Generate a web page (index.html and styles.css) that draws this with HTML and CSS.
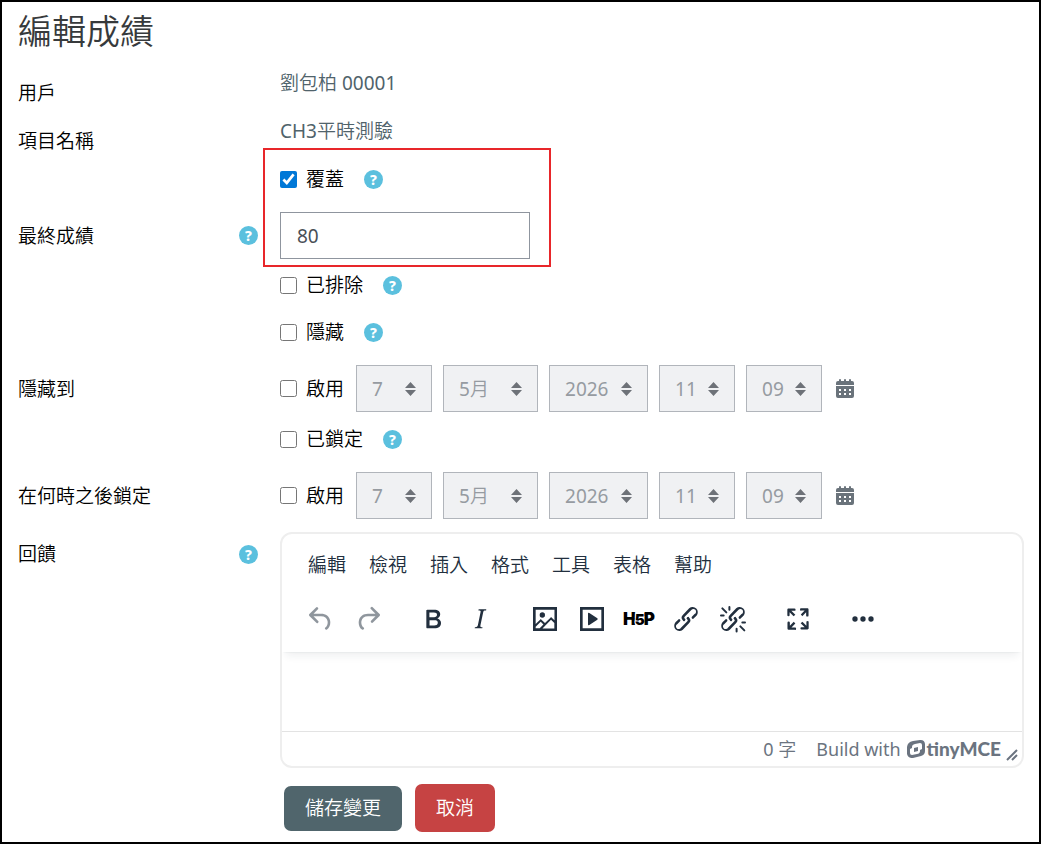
FILE: index.html
```html
<!DOCTYPE html>
<html lang="zh-Hant">
<head>
    <meta charset="UTF-8">
    <meta name="viewport" content="width=device-width, initial-scale=1">
    <title>編輯成績</title>
    <link rel="stylesheet" href="styles.css">
</head>
<body>
    <form class="page">
        <h1>編輯成績</h1>

        <div class="row row-static">
            <div class="label">用戶</div>
            <div class="field">劉包柏 00001</div>
        </div>
        <div class="row row-static">
            <div class="label">項目名稱</div>
            <div class="field">CH3平時測驗</div>
        </div>

        <div class="marked">
            <div class="row">
                <div class="field check">
                    <input type="checkbox" id="overridden" checked>
                    <label for="overridden">覆蓋</label>
                    <button type="button" class="help" aria-label="覆蓋說明">?</button>
                </div>
            </div>
            <div class="row row-control">
                <div class="label">
                    <label for="finalgrade">最終成績</label>
                    <button type="button" class="help" aria-label="最終成績說明">?</button>
                </div>
                <div class="field">
                    <input type="text" class="grade" id="finalgrade" value="80">
                </div>
            </div>
        </div>

        <div class="row">
            <div class="field check">
                <input type="checkbox" id="excluded">
                <label for="excluded">已排除</label>
                <button type="button" class="help" aria-label="已排除說明">?</button>
            </div>
        </div>
        <div class="row">
            <div class="field check">
                <input type="checkbox" id="hidden">
                <label for="hidden">隱藏</label>
                <button type="button" class="help" aria-label="隱藏說明">?</button>
            </div>
        </div>

        <div class="row row-control">
            <div class="label">隱藏到</div>
            <div class="field check">
                <input type="checkbox" id="hiddenuntil">
                <label for="hiddenuntil">啟用</label>
                <div class="date">
                    <select class="short" aria-label="日" disabled><option>7</option></select>
                    <select class="month" aria-label="月" disabled><option>5月</option></select>
                    <select class="year" aria-label="年" disabled><option>2026</option></select>
                    <select class="short" aria-label="時" disabled><option>11</option></select>
                    <select class="short" aria-label="分" disabled><option>09</option></select>
                    <a href="#" class="calendar" aria-label="日曆">
                        <svg viewBox="0 0 18 20"><path fill-rule="evenodd" d="M3 2V1q0-1 1-1t1 1v1h3V1q0-1 1-1t1 1v1h3V1q0-1 1-1t1 1v1h1q2 0 2 2v2H0V4q0-2 2-2zM0 7h18v10q0 2-2 2H2q-2 0-2-2zM3 10v2h2v-2zM8 10v2h2v-2zM13 10v2h2v-2zM3 14v2h2v-2zM8 14v2h2v-2zM13 14v2h2v-2z"/></svg>
                    </a>
                </div>
            </div>
        </div>

        <div class="row">
            <div class="field check">
                <input type="checkbox" id="locked">
                <label for="locked">已鎖定</label>
                <button type="button" class="help" aria-label="已鎖定說明">?</button>
            </div>
        </div>

        <div class="row row-control">
            <div class="label">在何時之後鎖定</div>
            <div class="field check">
                <input type="checkbox" id="lockafter">
                <label for="lockafter">啟用</label>
                <div class="date">
                    <select class="short" aria-label="日" disabled><option>7</option></select>
                    <select class="month" aria-label="月" disabled><option>5月</option></select>
                    <select class="year" aria-label="年" disabled><option>2026</option></select>
                    <select class="short" aria-label="時" disabled><option>11</option></select>
                    <select class="short" aria-label="分" disabled><option>09</option></select>
                    <a href="#" class="calendar" aria-label="日曆">
                        <svg viewBox="0 0 18 20"><path fill-rule="evenodd" d="M3 2V1q0-1 1-1t1 1v1h3V1q0-1 1-1t1 1v1h3V1q0-1 1-1t1 1v1h1q2 0 2 2v2H0V4q0-2 2-2zM0 7h18v10q0 2-2 2H2q-2 0-2-2zM3 10v2h2v-2zM8 10v2h2v-2zM13 10v2h2v-2zM3 14v2h2v-2zM8 14v2h2v-2zM13 14v2h2v-2z"/></svg>
                    </a>
                </div>
            </div>
        </div>

        <div class="row row-editor">
            <div class="label">
                <label for="feedback">回饋</label>
                <button type="button" class="help" aria-label="回饋說明">?</button>
            </div>
            <div class="field editor">
                <div class="editor-header">
                    <div class="menubar">
                        <button type="button">編輯</button>
                        <button type="button">檢視</button>
                        <button type="button">插入</button>
                        <button type="button">格式</button>
                        <button type="button">工具</button>
                        <button type="button">表格</button>
                        <button type="button">幫助</button>
                    </div>
                    <div class="toolbar">
                        <div class="group">
                            <button type="button" aria-label="復原" disabled>
                                <svg viewBox="0 0 24 24"><path d="M6.4 8H12c3.7 0 6.2 2 6.8 5.1.6 2.7-.4 5.6-2.3 6.8a1 1 0 0 1-1-1.8c1.1-.6 1.8-2.7 1.4-4.6-.5-2.1-2.1-3.5-4.9-3.5H6.4l3.3 3.3a1 1 0 1 1-1.4 1.4l-5-5a1 1 0 0 1 0-1.4l5-5a1 1 0 0 1 1.4 1.4L6.4 8Z"/></svg>
                            </button>
                            <button type="button" aria-label="重做" disabled>
                                <svg viewBox="0 0 24 24"><path d="M17.6 10H12c-2.8 0-4.4 1.4-4.9 3.5-.4 2 .3 4 1.4 4.6a1 1 0 1 1-1 1.8c-2-1.2-2.9-4.1-2.3-6.8.6-3 3-5.1 6.8-5.1h5.6l-3.3-3.3a1 1 0 1 1 1.4-1.4l5 5a1 1 0 0 1 0 1.4l-5 5a1 1 0 0 1-1.4-1.4l3.3-3.3Z"/></svg>
                            </button>
                        </div>
                        <div class="group">
                            <button type="button" aria-label="粗體">
                                <svg viewBox="0 0 24 24"><path d="M7.8 19c-.3 0-.5 0-.6-.2l-.2-.5V5.7c0-.2 0-.4.2-.5l.6-.2h5c1.5 0 2.7.3 3.5 1 .7.6 1.1 1.4 1.1 2.5a3 3 0 0 1-.6 1.9c-.4.6-1 1-1.6 1.2.4.1.9.3 1.3.6s.8.7 1 1.2c.4.4.5 1 .5 1.6 0 1.3-.4 2.3-1.3 3-.8.7-2.1 1-3.8 1H7.8Zm5-8.3c.6 0 1.2-.1 1.6-.5.4-.3.6-.7.6-1.3 0-1.1-.8-1.7-2.3-1.7H9.3v3.5h3.4Zm.5 6c.7 0 1.3-.1 1.7-.4.4-.4.6-.9.6-1.5s-.2-1-.7-1.4c-.4-.3-1-.4-2-.4H9.4v3.8h4Z"/></svg>
                            </button>
                            <button type="button" aria-label="斜體">
                                <svg viewBox="0 0 24 24"><path d="m16.7 4.7-.1.9h-.3c-.6 0-1 0-1.4.3-.3.3-.4.6-.5 1.1l-2.1 9.8v.6c0 .5.4.8 1.4.8h.2l-.2.8H8l.2-.8h.2c1.1 0 1.8-.5 2-1.5l2-9.8.1-.5c0-.6-.4-.8-1.4-.8h-.3l.2-.9h5.8Z"/></svg>
                            </button>
                        </div>
                        <div class="group">
                            <button type="button" aria-label="圖片">
                                <svg viewBox="0 0 24 24"><path fill-rule="evenodd" d="m5 15.7 3.3-3.2c.3-.3.7-.3 1 0L12 15l4.1-4c.3-.4.8-.4 1 0l2 1.9V5H5v10.7ZM5 18V19h3l2.8-2.9-2-2L5 17.9Zm14-3-2.5-2.4-6.4 6.5H19v-4ZM3 3h18v18H3ZM10 11a2 2 0 1 0 0-4 2 2 0 0 0 0 4Z"/></svg>
                            </button>
                            <button type="button" aria-label="多媒體">
                                <svg viewBox="0 0 24 24"><path fill-rule="evenodd" d="M3 3h18v18H3ZM5 5v14h14V5ZM9 8q0-1 1-.5l6 4q.6.5 0 1l-6 4q-1 .5-1-.5Z"/></svg>
                            </button>
                            <button type="button" aria-label="H5P">
                                <svg class="h5p" viewBox="0 0 34 32">
                                    <path d="M10 15h5v4h-5zM19 10h5v3h-5z"/>
                                    <text x="1" y="22">H<tspan class="five" dx="-1">5</tspan><tspan dx="-1">P</tspan></text>
                                </svg>
                            </button>
                            <button type="button" aria-label="連結">
                                <svg viewBox="0 0 24 24"><path d="M6.2 12.3a1 1 0 0 1 1.4 1.4l-2 2a2 2 0 1 0 2.6 2.8l4.8-4.8a1 1 0 0 0 0-1.4 1 1 0 1 1 1.4-1.3 2.9 2.9 0 0 1 0 4L9.6 20a3.9 3.9 0 0 1-5.5-5.5l2-2Zm11.6-.6a1 1 0 0 1-1.4-1.4l2-2a2 2 0 1 0-2.6-2.8L11 10.3a1 1 0 0 0 0 1.4A1 1 0 1 1 9.6 13a2.9 2.9 0 0 1 0-4L14.4 4a3.9 3.9 0 0 1 5.5 5.5l-2 2Z"/></svg>
                            </button>
                            <button type="button" aria-label="取消連結">
                                <svg viewBox="0 0 24 24">
                                    <path d="M6.2 12.3a1 1 0 0 1 1.4 1.4l-2 2a2 2 0 1 0 2.6 2.8l4.8-4.8a1 1 0 0 0 0-1.4 1 1 0 1 1 1.4-1.3 2.9 2.9 0 0 1 0 4L9.6 20a3.9 3.9 0 0 1-5.5-5.5l2-2Zm11.6-.6a1 1 0 0 1-1.4-1.4l2-2a2 2 0 1 0-2.6-2.8L11 10.3a1 1 0 0 0 0 1.4A1 1 0 1 1 9.6 13a2.9 2.9 0 0 1 0-4L14.4 4a3.9 3.9 0 0 1 5.5 5.5l-2 2Z"/>
                                    <path class="line" d="M4 4l3 3M9.300 3v2M3 9.300h2M17.500 17.500l3 3M14.700 19.300v2M19 14.700h2"/>
                                </svg>
                            </button>
                        </div>
                        <div class="group">
                            <button type="button" aria-label="全螢幕">
                                <svg viewBox="0 0 24 24"><path d="m15.3 10-1.2-1.3 2.9-3h-2.3a.9.9 0 1 1 0-1.7H19c.5 0 .9.4.9.9v4.4a.9.9 0 1 1-1.8 0V7l-2.9 3Zm0 4 3 3v-2.3a.9.9 0 1 1 1.7 0V19c0 .5-.4.9-.9.9h-4.4a.9.9 0 1 1 0-1.8H17l-3-2.9 1.3-1.2ZM10 15.4l-2.9 3h2.3a.9.9 0 1 1 0 1.7H5a.9.9 0 0 1-.9-.9v-4.4a.9.9 0 1 1 1.8 0V17l2.9-3 1.2 1.3ZM8.7 10 5.7 7v2.3a.9.9 0 0 1-1.7 0V5c0-.5.4-.9.9-.9h4.4a.9.9 0 0 1 0 1.8H7l3 2.9-1.3 1.2Z"/></svg>
                            </button>
                        </div>
                        <div class="group">
                            <button type="button" aria-label="更多">
                                <svg viewBox="0 0 24 24"><circle cx="6" cy="12" r="2"/><circle cx="12" cy="12" r="2"/><circle cx="18" cy="12" r="2"/></svg>
                            </button>
                        </div>
                    </div>
                </div>
                <textarea id="feedback"></textarea>
                <div class="statusbar">
                    <span>0 字</span>
                    <a href="#" class="brand">Build with
                        <svg viewBox="0 0 18 18"><path fill-rule="evenodd" d="M6 1l7-1q4.500-.2 5 4v7q0 4-4 5l-8 2q-5 .5-6-4V7q.5-5 6-6zM8 4Q5 4.500 5 7v1l-2 1v4q0 2 2 2l5-1q3-.5 3-3v-1l2-1V5q0-2-2-2zM7 8l4-1v4l-4 1z"/></svg>
                        <b>tinyMCE</b>
                    </a>
                    <svg class="resize" viewBox="0 0 12 12"><path d="M1 11 11 1M6 11l5-5"/></svg>
                </div>
            </div>
        </div>

        <div class="row row-actions">
            <div class="field actions">
                <button type="submit" class="save">儲存變更</button>
                <button type="button" class="cancel">取消</button>
            </div>
        </div>
    </form>
</body>
</html>
```
FILE: styles.css
```css
* {
    box-sizing: border-box;
}

body {
    margin: 0;
    min-height: 100vh;
    border: 2px solid #000;
    background-color: #fff;
    color: #000;
    font-family: "Noto Sans", "Noto Sans CJK TC DemiLight", "Noto Sans CJK TC", sans-serif;
    font-size: 19px;
    line-height: 28px;
}

button, input, select, textarea {
    margin: 0;
    padding: 0;
    border: 0;
    background: none;
    color: inherit;
    font: inherit;
}

a {
    color: inherit;
    text-decoration: none;
}

svg {
    display: block;
    fill: currentColor;
}

.page {
    padding: 8px 15px 8px 16px;
}

h1 {
    margin: 0 0 17px;
    color: #373a3c;
    font-size: 34px;
    font-weight: 400;
    line-height: 42px;
}

/* form rows */
.row {
    display: grid;
    grid-template-columns: 240px minmax(0, 1fr);
    column-gap: 22px;
    margin-bottom: 19px;
}

.row-static {
    height: 28px;
    margin-bottom: 20px;
}

.row-static .label {
    padding-top: 10px;
}

.row-static .field {
    color: #50636b;
}

.row-control {
    align-items: center;
    margin-bottom: 13px;
}

.marked .row-control {
    margin-bottom: 12px;
}

.row-editor {
    margin-bottom: 16px;
}

.row-actions {
    margin-bottom: 0;
}

.row-editor .label {
    padding-top: 8px;
}

.label {
    display: flex;
    align-items: center;
    justify-content: space-between;
    align-self: start;
}

.row-control .label {
    align-self: center;
}

.field {
    grid-column: 2;
}

.check {
    display: flex;
    align-items: center;
}

.check input {
    width: 17px;
    height: 17px;
    margin-right: 9px;
    accent-color: #0078d7;
}

.check .help {
    margin-left: 20px;
}

.help {
    width: 19px;
    height: 19px;
    border-radius: 50%;
    background-color: #5bc0de;
    color: #fff;
    font-size: 14px;
    font-weight: 800;
    line-height: 19px;
    text-align: center;
}

.grade {
    display: block;
    width: 250px;
    height: 47px;
    padding: 0 16px;
    border: 1px solid #8f959e;
    color: #495057;
}

/* red frame round the overridden grade */
.marked {
    position: relative;
}

.marked::after {
    content: "";
    position: absolute;
    top: -17px;
    bottom: -8px;
    left: 245px;
    width: 284px;
    border: 2px solid #e8262a;
    pointer-events: none;
}

.date {
    display: flex;
    align-items: center;
    gap: 11px;
    margin-left: 12px;
}

.date select {
    height: 47px;
    padding: 0 15px;
    border: 1px solid #b1b5bb;
    border-radius: 0;
    appearance: none;
    background: #f0f1f3 url("data:image/svg+xml,%3Csvg xmlns='http://www.w3.org/2000/svg' viewBox='0 0 11 14'%3E%3Cpath fill='%236e7278' d='M0 6l5.500-6L11 6zM0 8h11l-5.500 6z'/%3E%3C/svg%3E") no-repeat right 15px center / 11px 14px;
    color: #969ba1;
    opacity: 1;
}

.date .short {
    width: 76px;
}

.date .month {
    width: 95px;
}

.date .year {
    width: 99px;
}

.calendar {
    margin-left: 3px;
    color: #6a737b;
}

.calendar svg {
    width: 18px;
    height: 20px;
}

/* text editor */
.editor {
    overflow: hidden;
    border: 2px solid #eee;
    border-radius: 12px;
}

.editor-header {
    position: relative;
    padding: 11px 15px 10px;
    color: #222f3e;
    box-shadow: 0 2px 2px -2px rgba(34, 47, 62, .1), 0 8px 8px -4px rgba(34, 47, 62, .07);
}

.menubar {
    display: flex;
    gap: 1px;
}

.menubar button {
    height: 40px;
    padding: 0 11px;
}

.toolbar {
    display: flex;
    gap: 18px;
    margin-top: 10px;
}

.group {
    display: flex;
}

.toolbar button {
    display: flex;
    align-items: center;
    justify-content: center;
    width: 47px;
    height: 47px;
}

.toolbar button:disabled {
    opacity: .5;
}

.toolbar svg {
    width: 32px;
    height: 32px;
}

.toolbar .h5p {
    width: 34px;
    color: #000;
    font-family: Inter, sans-serif;
    font-size: 17px;
    font-weight: 900;
}

.h5p .five {
    font-size: 15px;
    paint-order: stroke;
    stroke: #fff;
    stroke-width: 2px;
}

.line {
    stroke: currentColor;
    stroke-width: 1.5;
    stroke-linecap: round;
}

textarea {
    display: block;
    width: 100%;
    height: 79px;
    padding: 16px;
    resize: none;
    outline: 0;
}

.statusbar {
    display: flex;
    align-items: center;
    justify-content: flex-end;
    height: 35px;
    padding-right: 4px;
    border-top: 1px solid #e3e3e3;
    color: #6b7480;
    font-size: 18px;
}

.brand {
    display: flex;
    align-items: center;
    margin-left: 20px;
}

.brand svg {
    width: 18px;
    height: 18px;
    margin: 0 2px 0 6px;
}

.brand b {
    font-family: Lato, sans-serif;
    font-size: 19px;
    font-weight: 900;
}

.resize {
    align-self: flex-end;
    width: 12px;
    height: 12px;
    margin: 0 0 5px 5px;
    fill: none;
    stroke: currentColor;
    stroke-width: 2;
}

/* buttons */
.actions {
    display: flex;
    align-items: center;
    gap: 13px;
    padding-left: 4px;
}

.save, .cancel {
    height: 45px;
    padding: 0 21px;
    border-radius: 7px;
    background-color: #50656c;
    color: #fff;
}

.cancel {
    height: 48px;
    background-color: #c64343;
}
```
